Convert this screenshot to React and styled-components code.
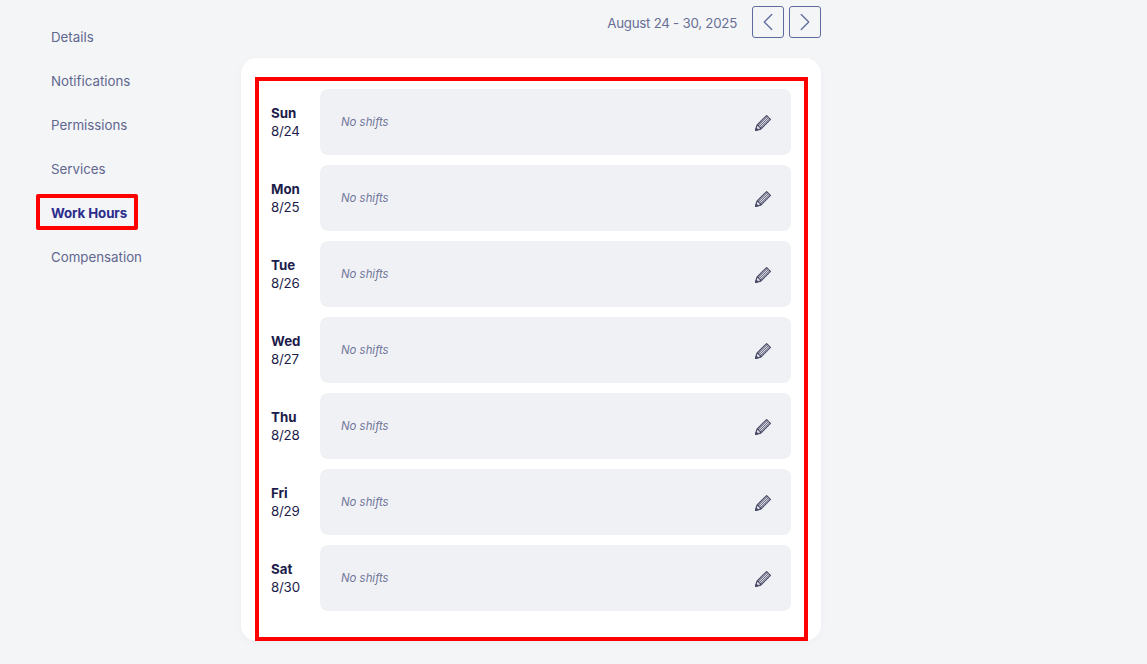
import React from 'react';
import styled, { createGlobalStyle } from 'styled-components';
import { LuChevronLeft, LuChevronRight } from 'react-icons/lu';

const GlobalStyle = createGlobalStyle`
  html, body {
    margin: 0;
    padding: 0;
    height: 100%;
    background: #f4f5f7;
    overflow: hidden;
  }
  body {
    font-family: "Inter", "Liberation Sans", sans-serif;
  }
`;

const Page = styled.div`
  display: flex;
  align-items: flex-start;
  width: 1147px;
  height: 664px;
  padding-top: 6px;
  box-sizing: border-box;
`;

const Sidebar = styled.nav`
  display: flex;
  flex-direction: column;
  width: 241px;
  padding: 9px 0 0 51px;
  box-sizing: border-box;
  flex-shrink: 0;
`;

const NavItem = styled.a`
  position: relative;
  display: block;
  height: 44px;
  line-height: 44px;
  font-size: 13.3px;
  white-space: nowrap;
  font-weight: ${(p) => (p.$active ? 700 : 400)};
  letter-spacing: ${(p) => (p.$active ? '-0.1px' : '0')};
  color: ${(p) => (p.$active ? '#2c2c8c' : '#61678f')};
`;

const Highlight = styled.span`
  position: absolute;
  left: -15px;
  top: 3px;
  width: 102px;
  height: 36px;
  border: 4px solid #ff0000;
  border-radius: 2px;
  box-sizing: border-box;
`;

const Main = styled.div`
  display: flex;
  flex-direction: column;
  width: 580px;
`;

const WeekBar = styled.div`
  display: flex;
  align-items: center;
  justify-content: flex-end;
  height: 32px;
  margin-bottom: 20px;
`;

const WeekLabel = styled.span`
  font-size: 13.3px;
  letter-spacing: -0.25px;
  color: #686f96;
  margin: 2px 15px 0 0;
`;

const ArrowButton = styled.button`
  display: flex;
  align-items: center;
  justify-content: center;
  width: 32px;
  height: 32px;
  margin-left: ${(p) => (p.$spaced ? '5px' : '0')};
  padding: 0;
  background: transparent;
  border: 1px solid #5f6a9e;
  border-radius: 3px;
  color: #5f6a9e;
  font-size: 32px;
`;

const Card = styled.section`
  position: relative;
  display: flex;
  flex-direction: column;
  gap: 10px;
  height: 583px;
  padding: 31px 30px 0;
  box-sizing: border-box;
  background: #fff;
  border-radius: 16px;
  box-shadow: 0 2px 8px rgba(40, 45, 90, 0.03);
`;

const CardHighlight = styled.div`
  position: absolute;
  left: 14px;
  top: 19px;
  width: 553px;
  height: 564px;
  border: 4px solid #ff0000;
  box-sizing: border-box;
  pointer-events: none;
`;

const DayRow = styled.div`
  display: flex;
  align-items: center;
  height: 66px;
`;

const DayLabel = styled.div`
  width: 49px;
  flex-shrink: 0;
  font-size: 13.3px;
  line-height: 18px;
  color: #1c1c4a;
`;

const DayName = styled.div`
  font-weight: 700;
`;

const DayDate = styled.div`
  letter-spacing: -0.2px;
`;

const ShiftBox = styled.div`
  flex: 1;
  display: flex;
  align-items: center;
  justify-content: space-between;
  height: 100%;
  padding: 0 19px 0 21px;
  background: #f0f1f5;
  border-radius: 8px;
`;

const NoShifts = styled.span`
  font-size: 11.4px;
  font-style: italic;
  color: #6f7599;
`;

const EditIcon = styled.svg`
  display: block;
  width: 18px;
  height: 18px;
  margin-top: 1px;
  color: #4a4c68;
`;

const PencilIcon = () => (
  <EditIcon viewBox="0 0 18 18" fill="none" stroke="currentColor" strokeWidth="1.3" strokeLinejoin="round">
    <path d="M1.6 16.4 L3 11.2 L12.6 1.6 L16.4 5.4 L6.8 15 Z" />
    <path d="M3 11.2 L4.6 11.6 L5.2 13.0 L6.5 13.4 L6.8 15" />
    <path d="M4.6 11.6 L13.6 2.6 M6.5 13.4 L15.4 4.4 M5.4 12.6 L14.5 3.5" strokeWidth="0.8" />
    <path d="M1.6 16.4 L2.2 14.2 L3.8 15.8 Z" fill="currentColor" />
  </EditIcon>
);

const navItems = ['Details', 'Notifications', 'Permissions', 'Services', 'Work Hours', 'Compensation'];

const days = [
  ['Sun', '8/24'],
  ['Mon', '8/25'],
  ['Tue', '8/26'],
  ['Wed', '8/27'],
  ['Thu', '8/28'],
  ['Fri', '8/29'],
  ['Sat', '8/30'],
];

export default function App() {
  return (
    <>
      <GlobalStyle />
      <Page>
        <Sidebar>
          {navItems.map((item) => (
            <NavItem key={item} $active={item === 'Work Hours'}>
              {item}
              {item === 'Work Hours' && <Highlight />}
            </NavItem>
          ))}
        </Sidebar>
        <Main>
          <WeekBar>
            <WeekLabel>August 24 - 30, 2025</WeekLabel>
            <ArrowButton aria-label="Previous week"><LuChevronLeft strokeWidth={1} /></ArrowButton>
            <ArrowButton $spaced aria-label="Next week"><LuChevronRight strokeWidth={1} /></ArrowButton>
          </WeekBar>
          <Card>
            {days.map(([name, date]) => (
              <DayRow key={name}>
                <DayLabel>
                  <DayName>{name}</DayName>
                  <DayDate>{date}</DayDate>
                </DayLabel>
                <ShiftBox>
                  <NoShifts>No shifts</NoShifts>
                  <PencilIcon />
                </ShiftBox>
              </DayRow>
            ))}
            <CardHighlight />
          </Card>
        </Main>
      </Page>
    </>
  );
}
